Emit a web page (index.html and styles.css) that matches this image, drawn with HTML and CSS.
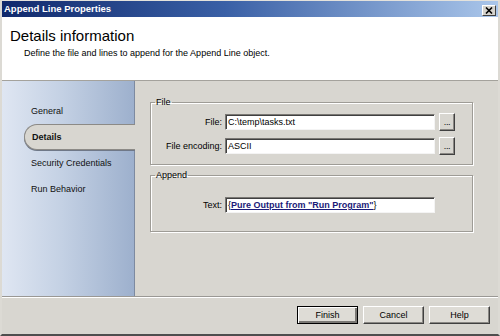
FILE: index.html
```html
<!DOCTYPE html>
<html>
<head>
<meta charset="utf-8">
<link rel="stylesheet" href="styles.css">
</head>
<body>
<div class="window">
  <div class="titlebar">
    <span class="title">Append Line Properties</span>
    <span class="close">
      <svg width="8" height="7" viewBox="0 0 8 7"><path d="M1 0.5 L7 6.5 M7 0.5 L1 6.5" stroke="#000" stroke-width="1.6"/></svg>
    </span>
  </div>
  <div class="header">
    <div class="h-title">Details information</div>
    <div class="h-sub">Define the file and lines to append for the Append Line object.</div>
  </div>
  <div class="main">
    <nav class="nav">
      <div class="nav-item">General</div>
      <div class="nav-item selected">Details</div>
      <div class="nav-item">Security Credentials</div>
      <div class="nav-item">Run Behavior</div>
    </nav>
    <div class="content">
      <fieldset class="group group-file">
        <legend>File</legend>
        <div class="row">
          <label class="lbl">File:</label>
          <div class="input">C:\temp\tasks.txt</div>
          <div class="btn-small">...</div>
        </div>
        <div class="row">
          <label class="lbl">File encoding:</label>
          <div class="input">ASCII</div>
          <div class="btn-small">...</div>
        </div>
      </fieldset>
      <fieldset class="group group-append">
        <legend>Append</legend>
        <div class="row">
          <label class="lbl">Text:</label>
          <div class="input">{<span class="token">Pure Output from "Run Program"</span>}</div>
        </div>
      </fieldset>
    </div>
  </div>
  <div class="footer">
    <div class="btn default">Finish</div>
    <div class="btn">Cancel</div>
    <div class="btn">Help</div>
  </div>
</div>
</body>
</html>
```

FILE: styles.css
```css
* { box-sizing: border-box; }
html, body { margin: 0; padding: 0; }
body {
  width: 500px;
  height: 336px;
  overflow: hidden;
  font-family: "Liberation Sans", Arial, sans-serif;
  font-size: 9px;
  color: #000;
  background: #d8d6d0;
}
.window {
  width: 500px;
  height: 336px;
  border-top: 1px solid #e4e2dc;
  border-left: 2px solid #dcdad4;
  border-right: 2px solid #dcdad4;
  border-bottom: 2px solid #4e4e4e;
  display: flex;
  flex-direction: column;
  background: #d8d6d0;
}
.titlebar {
  height: 16px;
  flex: none;
  background: linear-gradient(to right, #10296c 0%, #3a60a6 45%, #aac6ea 100%);
  display: flex;
  align-items: center;
  justify-content: space-between;
  padding: 0 2px 0 2px;
}
.title {
  color: #fff;
  font-weight: bold;
  font-size: 9.5px;
  line-height: 12px;
}
.close {
  width: 14px;
  height: 11px;
  background: #d6d4ce;
  border-top: 1px solid #fff;
  border-left: 1px solid #fff;
  border-right: 1px solid #404040;
  border-bottom: 1px solid #404040;
  display: flex;
  align-items: center;
  justify-content: center;
  margin-top: 2px;
}
.close svg { display: block; }
.header {
  height: 64px;
  flex: none;
  background: #fff;
  border-bottom: 1px solid #a4a29c;
  padding-top: 10px;
}
.h-title {
  font-size: 15px;
  line-height: 18px;
  padding-left: 8px;
}
.h-sub {
  font-size: 9px;
  line-height: 11px;
  padding-left: 22px;
  margin-top: 3px;
}
.main {
  height: 215px;
  flex: none;
  display: flex;
}
.nav {
  width: 133px;
  flex: none;
  background: linear-gradient(to right, #dfe6f2 0%, #c4d1e4 45%, #9db0cd 100%);
  border-right: 1px solid #7d8aa0;
  padding-top: 17px;
  display: flex;
  flex-direction: column;
}
.nav-item {
  height: 26px;
  line-height: 26px;
  padding-left: 29px;
  color: #111;
}
.nav-item.selected {
  margin-left: 22px;
  margin-right: -1px;
  padding-left: 7px;
  font-weight: bold;
  background: #d8d6d0;
  border: 1px solid #8c8a86;
  border-right: none;
  border-radius: 13px 0 0 13px;
  box-shadow: 0 1px 0 #6f7888;
  line-height: 24px;
  position: relative;
}
.content {
  flex: 1;
  padding: 15px 0 0 15px;
  display: flex;
  flex-direction: column;
  gap: 4px;
}
.group {
  width: 323px;
  margin: 0;
  border: 1px solid #9e9c96;
  box-shadow: inset 1px 1px 0 #fff, 1px 1px 0 #fff;
  padding: 0;
}
.group legend {
  font-size: 9px;
  line-height: 12px;
  padding: 0 1px;
  margin-left: 4px;
}
.group-file { padding: 5px 0 9px 0; }
.group-append { padding: 15px 0 17px 0; }
.group-file .row + .row { margin-top: 6px; }
.row {
  display: flex;
  align-items: center;
  height: 18px;
}
.lbl {
  width: 71px;
  text-align: right;
  margin-right: 3px;
}
.input {
  width: 210px;
  height: 16px;
  background: #fff;
  border-top: 1px solid #7a7874;
  border-left: 1px solid #7a7874;
  border-right: 1px solid #f4f4f4;
  border-bottom: 1px solid #f4f4f4;
  box-shadow: inset 1px 1px 0 #404040;
  padding: 0 2px;
  line-height: 15px;
  font-size: 9px;
  white-space: nowrap;
  overflow: hidden;
}
.token {
  color: #1a1a78;
  font-weight: bold;
  text-decoration: underline;
}
.btn-small {
  width: 16px;
  height: 18px;
  margin-left: 4px;
  background: #d8d6d0;
  border-top: 1px solid #fff;
  border-left: 1px solid #fff;
  border-right: 1px solid #404040;
  border-bottom: 1px solid #404040;
  box-shadow: inset -1px -1px 0 #8a8884;
  text-align: center;
  font-size: 9px;
  line-height: 16px;
  letter-spacing: -0.3px;
}
.footer {
  flex: 1;
  border-top: 1px solid #9a9894;
  box-shadow: inset 0 1px 0 #fff;
  display: flex;
  justify-content: flex-end;
  gap: 5px;
  padding: 9px 8px 0 0;
}
.btn {
  width: 61px;
  height: 18px;
  background: #dedcd6;
  border-top: 1px solid #fff;
  border-left: 1px solid #fff;
  border-right: 1px solid #404040;
  border-bottom: 1px solid #404040;
  box-shadow: inset -1px -1px 0 #8a8884;
  text-align: center;
  line-height: 16px;
  font-size: 9px;
}
.btn.default {
  border: 1px solid #000;
  box-shadow: inset 1px 1px 0 #fff, inset -2px -2px 0 #7a7874;
}
```
